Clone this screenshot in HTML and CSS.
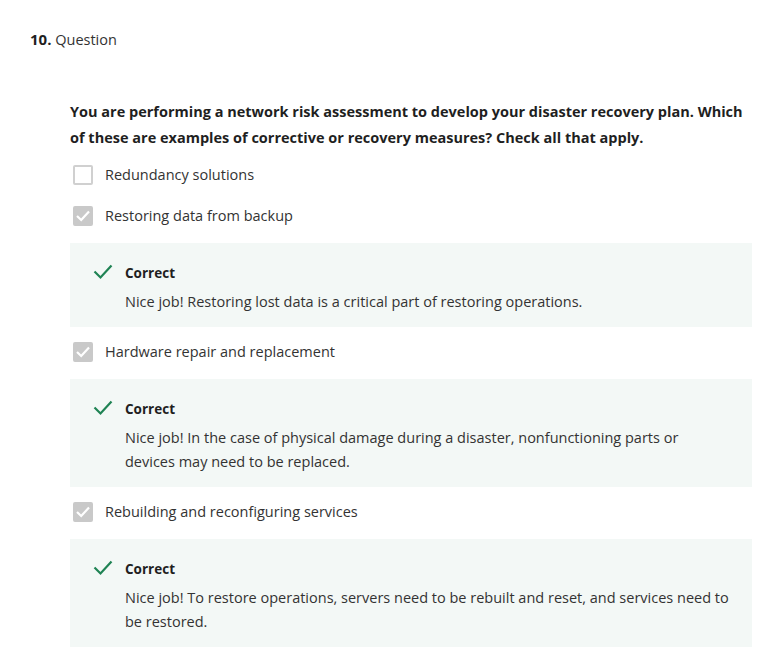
FILE: index.html
```html
<!DOCTYPE html>
<html>
<head>
<meta charset="utf-8">
<link rel="stylesheet" href="styles.css">
</head>
<body>
<div class="page">
  <div class="qhead"><span class="qnum">10.</span> Question</div>
  <div class="qbody">
    <p class="prompt">You are performing a network risk assessment to develop your disaster recovery plan. Which of these are examples of corrective or recovery measures? Check all that apply.</p>

    <div class="option">
      <span class="box"></span>
      <span class="label">Redundancy solutions</span>
    </div>

    <div class="option">
      <span class="box checked"><svg viewBox="0 0 20 20" width="20" height="20"><path d="M4 10 L8.2 14 L16 5.5" fill="none" stroke="#fff" stroke-width="2.2"/></svg></span>
      <span class="label">Restoring data from backup</span>
    </div>
    <div class="feedback">
      <svg class="tick" viewBox="0 0 20 16" width="20" height="16"><path d="M1.5 7.5 L7.5 13.5 L18.5 1.5" fill="none" stroke="#1f8354" stroke-width="2.2"/></svg>
      <div class="fb-title">Correct</div>
      <div class="fb-text">Nice job! Restoring lost data is a critical part of restoring operations.</div>
    </div>

    <div class="option">
      <span class="box checked"><svg viewBox="0 0 20 20" width="20" height="20"><path d="M4 10 L8.2 14 L16 5.5" fill="none" stroke="#fff" stroke-width="2.2"/></svg></span>
      <span class="label">Hardware repair and replacement</span>
    </div>
    <div class="feedback">
      <svg class="tick" viewBox="0 0 20 16" width="20" height="16"><path d="M1.5 7.5 L7.5 13.5 L18.5 1.5" fill="none" stroke="#1f8354" stroke-width="2.2"/></svg>
      <div class="fb-title">Correct</div>
      <div class="fb-text">Nice job! In the case of physical damage during a disaster, nonfunctioning parts or devices may need to be replaced.</div>
    </div>

    <div class="option">
      <span class="box checked"><svg viewBox="0 0 20 20" width="20" height="20"><path d="M4 10 L8.2 14 L16 5.5" fill="none" stroke="#fff" stroke-width="2.2"/></svg></span>
      <span class="label">Rebuilding and reconfiguring services</span>
    </div>
    <div class="feedback">
      <svg class="tick" viewBox="0 0 20 16" width="20" height="16"><path d="M1.5 7.5 L7.5 13.5 L18.5 1.5" fill="none" stroke="#1f8354" stroke-width="2.2"/></svg>
      <div class="fb-title">Correct</div>
      <div class="fb-text">Nice job! To restore operations, servers need to be rebuilt and reset, and services need to be restored.</div>
    </div>
  </div>
</div>
</body>
</html>
```
FILE: styles.css
```css
html, body {
  margin: 0;
  padding: 0;
  background: #fff;
}
body {
  font-family: "Open Sans", "Noto Sans", sans-serif;
  font-size: 14.5px;
  color: #333;
}
.page {
  padding: 27px 0 0 30px;
}
.qhead {
  font-size: 14.5px;
  line-height: 24px;
  color: #333;
}
.qnum {
  font-weight: 700;
  font-size: 15px;
  color: #1f1f1f;
}
.qbody {
  margin-left: 40px;
  width: 682px;
  padding-top: 47px;
}
.prompt {
  margin: 0;
  font-weight: 700;
  line-height: 26px;
  color: #1f1f1f;
  padding-bottom: 3px;
}
.option {
  display: flex;
  align-items: center;
  height: 41px;
}
.option + .feedback {
  margin-top: 7px;
}
.feedback + .option {
  margin-top: 4px;
}
.box {
  box-sizing: border-box;
  width: 20px;
  height: 20px;
  margin-left: 3px;
  margin-right: 12px;
  border: 2px solid #d0d0d0;
  border-radius: 2px;
  position: relative;
}
.box.checked {
  background: #c9c9c9;
  border-color: #c9c9c9;
}
.box svg {
  position: absolute;
  left: -2px;
  top: -2px;
}
.label {
  line-height: 24px;
  color: #333;
}
.feedback {
  position: relative;
  background: #f3f8f6;
  padding: 18px 20px 13px 55px;
}
.tick {
  position: absolute;
  left: 23px;
  top: 21px;
}
.fb-title {
  font-size: 13.5px;
  font-weight: 700;
  line-height: 24px;
  color: #1f1f1f;
}
.fb-text {
  margin-top: 5px;
  line-height: 24px;
  color: #333;
}
```
